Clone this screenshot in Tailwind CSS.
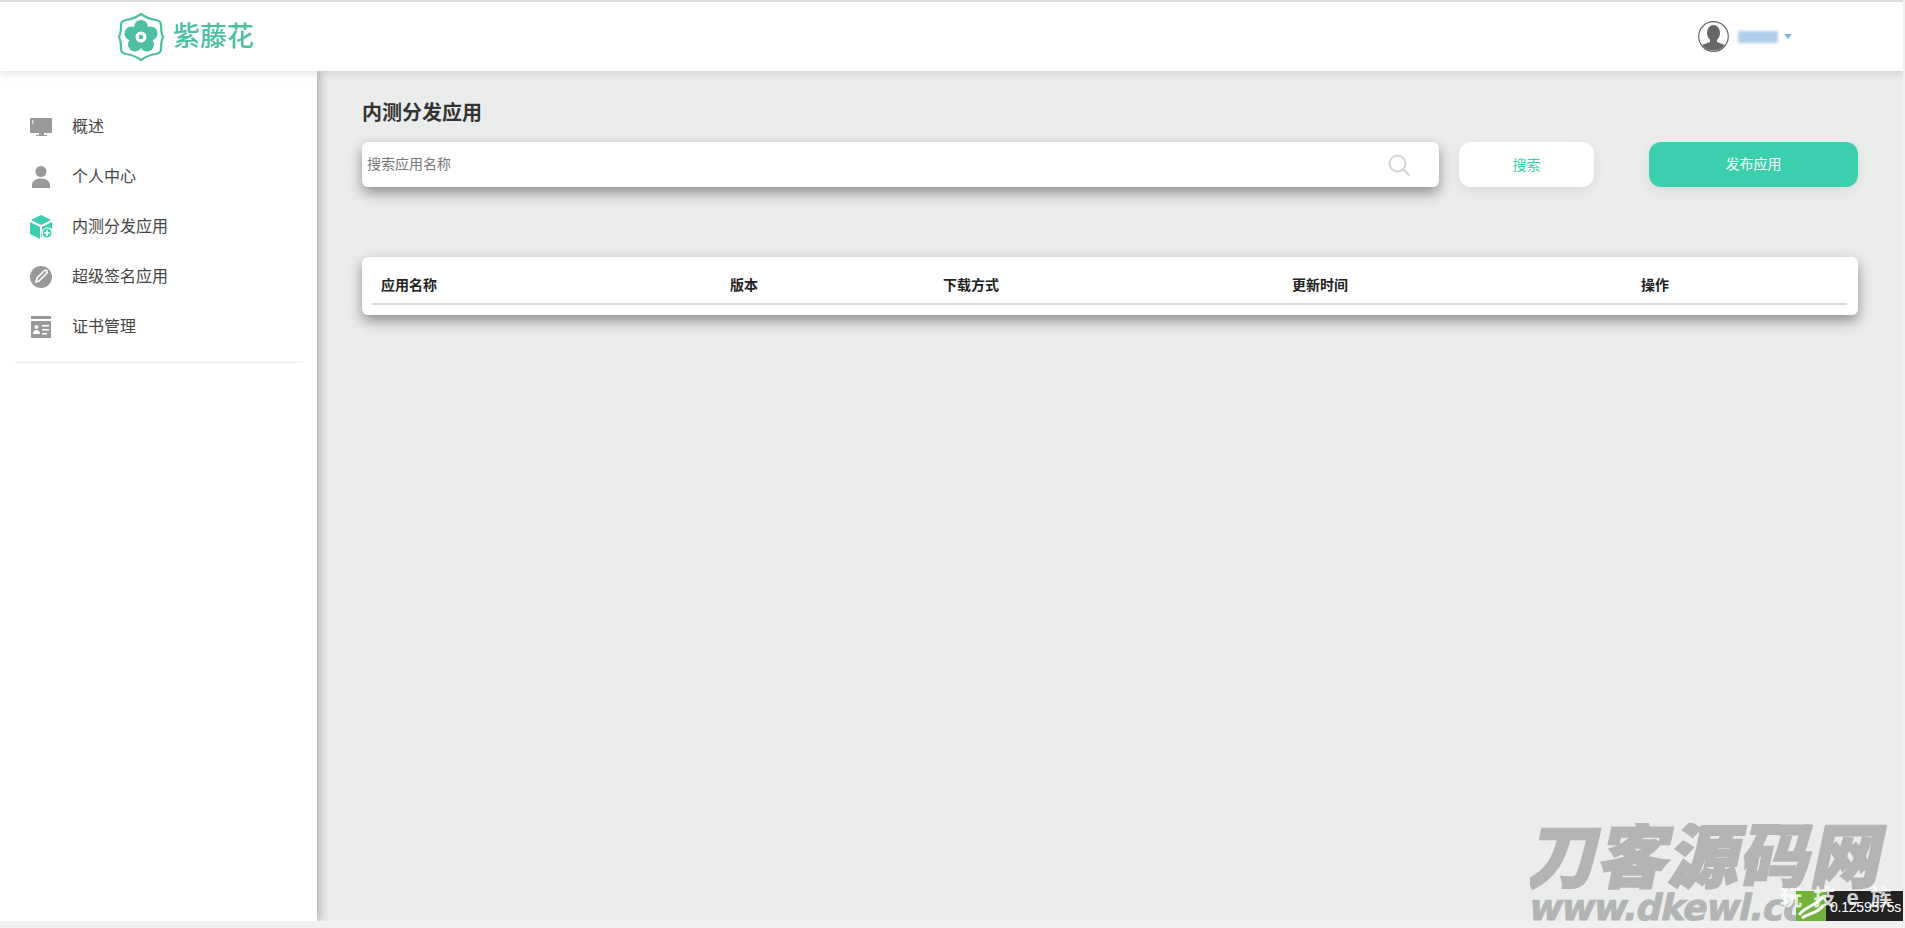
<!DOCTYPE html>
<html lang="zh">
<head>
  <meta charset="UTF-8" />
  <title>内测分发应用</title>
  <script src="https://cdn.jsdelivr.net/npm/@tailwindcss/browser@4"></script>
</head>
<body class="h-[928px] overflow-hidden bg-[#ebeded] font-['Liberation_Sans','Noto_Sans_CJK_SC',sans-serif] text-[#333]">
  <div class="flex h-[921px] flex-col overflow-hidden">
    <header class="relative z-20 flex h-[71px] shrink-0 items-center justify-between border-t-2 border-[#dcdde1] bg-white pr-[113px] pl-[117px] shadow-[0_2px_8px_rgba(0,0,0,0.12)]">
      <div class="flex items-center gap-[8px] blur-[0.5px]">
        <svg class="h-[50px] w-[48px]" viewBox="0 0 48 50">
          <path d="M24 2c4 3 8 5 15 6 3 .5 5 2 5 5 0 4 0 8 2 12-2 4-2 8-2 12 0 3-2 4.500-5 5-7 1-11 3-15 6-4-3-8-5-15-6-3-.5-5-2-5-5 0-4 0-8-2-12 2-4 2-8 2-12 0-3 2-4.500 5-5 7-1 11-3 15-6z" fill="none" stroke="#4dbfa3" stroke-width="2.200" />
          <g fill="#4dbfa3">
            <circle cx="24" cy="15" r="7" />
            <circle cx="33.500" cy="21.500" r="7" />
            <circle cx="30" cy="32.500" r="7" />
            <circle cx="18" cy="32.500" r="7" />
            <circle cx="14.500" cy="21.500" r="7" />
          </g>
          <circle cx="24" cy="25" r="5.500" fill="#fff" />
          <circle cx="24" cy="25" r="2.200" fill="#4dbfa3" />
        </svg>
        <span class="translate-y-px text-[27px] leading-none font-medium text-[#4dbfa3]">紫藤花</span>
      </div>
      <div class="flex items-center">
        <svg class="h-[31px] w-[31px]" viewBox="0 0 31 31">
          <defs>
            <clipPath id="avatarClip"><circle cx="15.500" cy="15.500" r="14" /></clipPath>
          </defs>
          <circle cx="15.500" cy="15.500" r="14.800" fill="#fff" stroke="#666" stroke-width="1.200" />
          <g clip-path="url(#avatarClip)" fill="#666">
            <ellipse cx="15.500" cy="12" rx="6.500" ry="8" />
            <path d="M12 18h7v3l8 3v8H4v-8l8-3z" />
          </g>
        </svg>
        <span class="ml-[9px] h-[12px] w-[40px] bg-[#b0cfec] blur-[1.500px]"></span>
        <span class="ml-[6px] h-0 w-0 border-x-[4px] border-t-[5px] border-x-transparent border-t-[#7fb2e0]"></span>
      </div>
    </header>

    <div class="flex min-h-0 flex-1">
      <aside class="relative z-10 w-[317px] shrink-0 bg-white px-[15px] pt-[31px] shadow-[2px_0_10px_rgba(0,0,0,0.3)]">
        <nav class="flex flex-col text-base text-[#444]">
          <a class="flex h-[50px] items-center">
            <svg class="ml-[14px] h-[24px] w-[24px]" viewBox="0 0 24 24" fill="#999">
              <path d="M2 3h20a1 1 0 0 1 1 1v13a1 1 0 0 1-1 1h-7v2h3v1H7v-1h3v-2H2a1 1 0 0 1-1-1V4a1 1 0 0 1 1-1z" />
              <rect x="3" y="5" width="1.500" height="4" fill="#ddd" />
            </svg>
            <span class="ml-[19px]">概述</span>
          </a>
          <a class="flex h-[50px] items-center">
            <svg class="ml-[14px] h-[24px] w-[24px]" viewBox="0 0 24 24" fill="#999">
              <circle cx="12" cy="6.500" r="5.500" />
              <path d="M3 23v-3c0-4 4-6.500 9-6.500s9 2.500 9 6.500v3z" />
            </svg>
            <span class="ml-[19px]">个人中心</span>
          </a>
          <a class="flex h-[50px] items-center">
            <svg class="ml-[14px] h-[24px] w-[24px]" viewBox="0 0 24 24">
              <path d="M12 0l10 5-10 5L2 5z" fill="#3ccfae" />
              <path d="M1 7l10 5v12L1 19z" fill="#3ccfae" />
              <path d="M13 12l10-5v7a7 7 0 0 0-10 9z" fill="#3ccfae" />
              <circle cx="18" cy="18" r="5" fill="#3ccfae" stroke="#fff" stroke-width="1" />
              <path d="M18 15v6M15 18h6" stroke="#fff" stroke-width="1.600" />
            </svg>
            <span class="ml-[19px]">内测分发应用</span>
          </a>
          <a class="flex h-[50px] items-center">
            <svg class="ml-[14px] h-[24px] w-[24px]" viewBox="0 0 24 24">
              <circle cx="12" cy="12" r="11" fill="#999" />
              <path d="M7 17l1-4 7-7c1-1 2.500-1 3 0s0 2-1 3l-7 7z" fill="none" stroke="#fff" stroke-width="1.600" />
            </svg>
            <span class="ml-[19px]">超级签名应用</span>
          </a>
          <a class="flex h-[50px] items-center">
            <svg class="ml-[14px] h-[24px] w-[24px]" viewBox="0 0 24 24" fill="#999">
              <rect x="2" y="1" width="20" height="3" />
              <rect x="2" y="6" width="20" height="17" rx="1" />
              <circle cx="7.500" cy="12" r="2" fill="#fff" />
              <path d="M4 19c0-2.500 1.500-4 3.500-4s3.500 1.500 3.500 4z" fill="#fff" />
              <path d="M13 10h7v1.500h-7zM13 14h7v1.500h-7zM13 18h5v1.500h-5z" fill="#fff" />
            </svg>
            <span class="ml-[19px]">证书管理</span>
          </a>
        </nav>
        <div class="mt-[10px] h-px bg-[#eee]"></div>
      </aside>

      <main class="relative min-w-0 flex-1 pt-[28px] pr-[45px] pl-[45px]">
        <h1 class="text-xl leading-[28px] font-bold text-[#333]">内测分发应用</h1>
        <div class="mt-[15px] flex h-[45px]">
          <div class="flex w-[1077px] items-center justify-between rounded-[6px] bg-white pr-[29px] pl-[5px] shadow-[0_6px_14px_rgba(0,0,0,0.4)]">
            <span class="-translate-y-px text-sm text-[#777]">搜索应用名称</span>
            <svg class="h-[22px] w-[22px]" viewBox="0 0 22 22" fill="none" stroke="#d5d5d5" stroke-width="2">
              <circle cx="9.500" cy="9.500" r="8" />
              <path d="M15.500 15.500l6 6" />
            </svg>
          </div>
          <div class="ml-[20px] flex w-[135px] items-center justify-center rounded-[12px] bg-white text-sm text-[#3ccfae] shadow-[0_4px_14px_rgba(0,0,0,0.07)]">搜索</div>
          <div class="ml-[55px] flex w-[209px] items-center justify-center rounded-[12px] bg-[#3ccfae] text-sm text-white shadow-[0_4px_14px_rgba(0,0,0,0.07)]"><span class="-translate-y-px">发布应用</span></div>
        </div>
        <div class="mt-[70px] h-[58px] w-[1496px] rounded-[6px] bg-white pr-[11px] pl-[10px] shadow-[0_6px_14px_rgba(0,0,0,0.4)]">
          <div class="flex h-[48px] items-end border-b-2 border-[#ddd] pb-[8px] pl-[9px] text-sm font-bold text-[#222]">
            <span class="w-[349px]">应用名称</span>
            <span class="w-[213px]">版本</span>
            <span class="w-[349px]">下载方式</span>
            <span class="w-[349px]">更新时间</span>
            <span>操作</span>
          </div>
        </div>
      </main>
    </div>
  </div>

  <!-- watermark over the page corner -->
  <div class="pointer-events-none absolute top-[823px] left-[1530px] z-30 h-[98px] w-[373px] overflow-hidden text-[#b3b5b4]">
    <div class="-skew-x-12 text-[70px] leading-[70px] font-black tracking-[1px] whitespace-nowrap [-webkit-text-stroke:2px_#b3b5b4]">刀客源码网</div>
    <div class="-mt-[3px] -skew-x-12 font-['DejaVu_Sans'] text-[36px] leading-[36px] font-bold tracking-[-1px] whitespace-nowrap [-webkit-text-stroke:1px_#b3b5b4]">www.dkewl.com</div>
  </div>
  <div class="absolute top-[891px] left-[1796px] z-40 flex h-[30px] w-[107px]">
    <svg class="h-[30px] w-[30px]" viewBox="0 0 30 30">
      <rect width="30" height="30" fill="#6fb33a" />
      <path d="M3 24C8 16 18 16 27 6M6 27c7-5 14-4 21-12" fill="none" stroke="#fff" stroke-width="3" />
    </svg>
    <div class="flex flex-1 items-center justify-center bg-[#222] pt-[2px] pl-[2px] text-[14px] tracking-[-0.2px] text-white">0.1259575s</div>
  </div>
  <div class="absolute top-[886px] left-[1780px] z-40 flex w-[112px] justify-between text-[22px] leading-[24px] font-bold text-white/80">
    <span>玩</span><span>技</span><span>e</span><span>族</span>
  </div>

  <div class="absolute inset-x-0 bottom-0 z-50 h-[7px] bg-[#f0f0f0]"></div>
  <div class="absolute top-0 right-0 bottom-0 z-50 w-[2px] bg-[#f0f0f0]"></div>
</body>
</html>
